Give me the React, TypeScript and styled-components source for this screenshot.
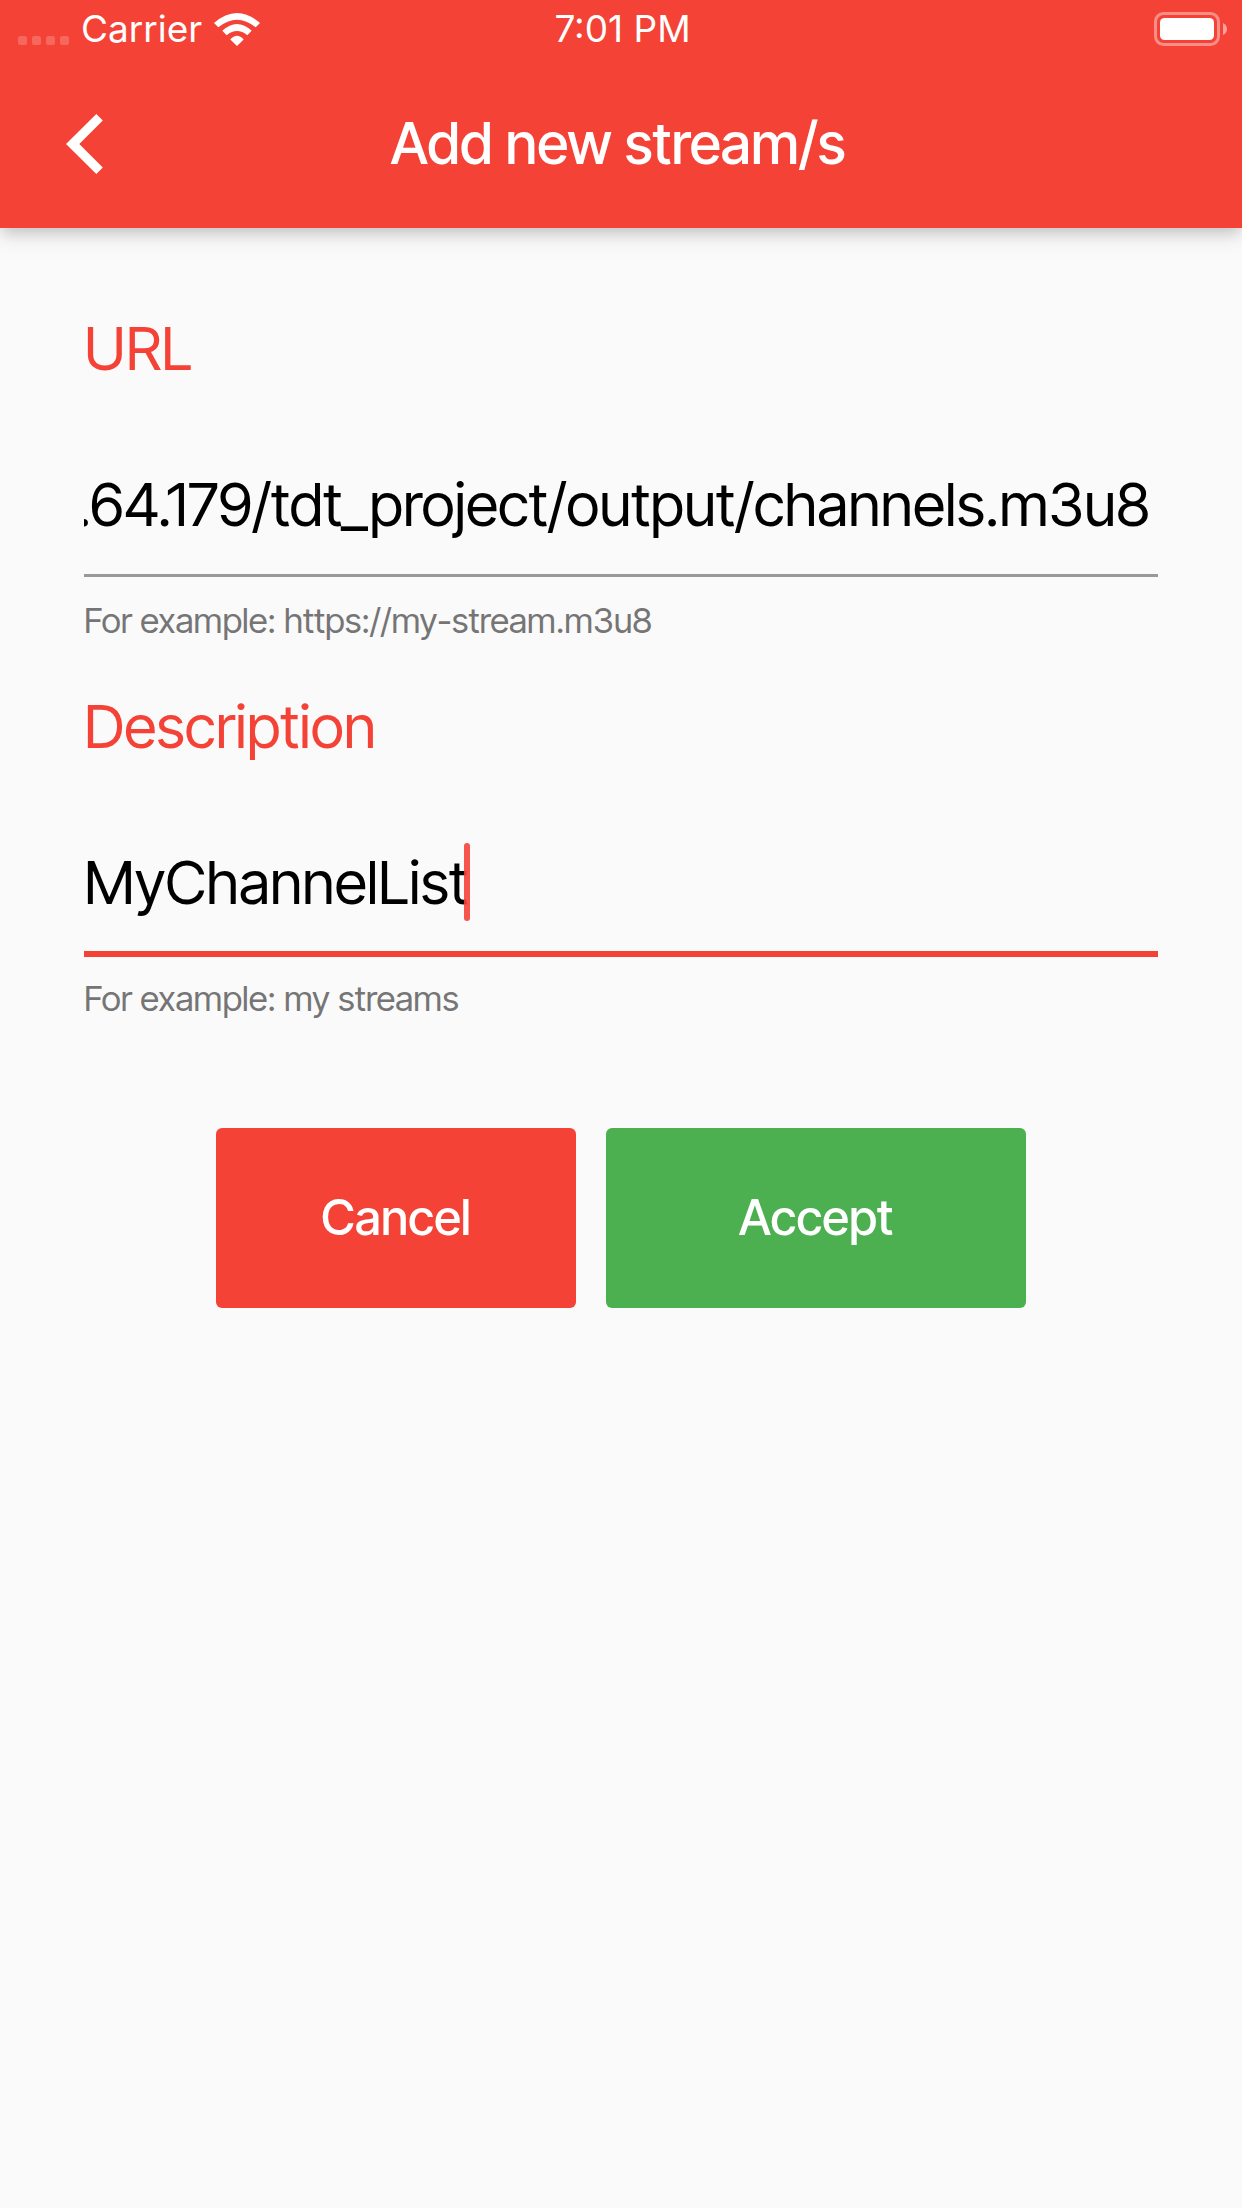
import React, { useLayoutEffect, useRef, useState } from "react";
import styled, { createGlobalStyle } from "styled-components";

const color = {
  primary: "#f44336",
  success: "#4caf50",
  page: "#fafafa",
  hint: "#757575",
  line: "#999999",
};

const GlobalStyle = createGlobalStyle`
  *, *::before, *::after { box-sizing: border-box; }
  body {
    margin: 0;
    background: ${color.page};
    font-family: "Inter Tight", Inter, "Liberation Sans", sans-serif;
    color: #000;
  }
`;

const Header = styled.header`
  background: ${color.primary};
  color: #fff;
  box-shadow:
    0 6px 12px -3px rgba(0, 0, 0, 0.12),
    0 9px 18px rgba(0, 0, 0, 0.12);
`;

const StatusBar = styled.div`
  display: grid;
  grid-template-columns: 1fr auto 1fr;
  align-items: center;
  height: 60px;
  padding: 0 15px 2px 18px;
  font-family: Inter, "Liberation Sans", sans-serif;
  font-size: 37px;
  line-height: 44px;
`;

const StatusGroup = styled.div<{ $end?: boolean }>`
  display: flex;
  align-items: center;
  justify-content: ${(p) => (p.$end ? "flex-end" : "flex-start")};
  gap: 12px;
`;

const NavBar = styled.nav`
  display: grid;
  grid-template-columns: 162px 1fr 168px;
  align-items: center;
  height: 168px;
`;

const BackButton = styled.button`
  display: flex;
  align-items: center;
  height: 144px;
  padding: 0 0 0 66px;
  border: 0;
  background: none;
  color: inherit;
  cursor: pointer;
`;

const Title = styled.h1`
  margin: 0;
  font-size: 57px;
  font-weight: 500;
  line-height: 64px;
  text-align: center;
`;

const Form = styled.form`
  display: flex;
  flex-direction: column;
  gap: 54px;
  padding: 88px 84px;
`;

const Field = styled.div`
  display: flex;
  flex-direction: column;
`;

const Label = styled.label`
  margin-bottom: 85px;
  color: ${color.primary};
  font-size: 60px;
  line-height: 64px;
`;

const InputRow = styled.div<{ $active?: boolean }>`
  display: flex;
  align-items: center;
  padding-bottom: ${(p) => (p.$active ? "30px" : "31px")};
  margin-bottom: ${(p) => (p.$active ? "0" : "2px")};
  border-bottom: ${(p) =>
    p.$active ? `6px solid ${color.primary}` : `3px solid ${color.line}`};
`;

const Input = styled.input<{ $fit?: boolean }>`
  flex: ${(p) => (p.$fit ? "0 1 auto" : "1")};
  field-sizing: ${(p) => (p.$fit ? "content" : "fixed")};
  min-width: 0;
  height: 78px;
  margin-right: ${(p) => (p.$fit ? "0" : "8px")};
  padding: 0;
  border: 0;
  outline: 0;
  background: none;
  color: inherit;
  font-family: inherit;
  font-size: 60px;
  line-height: 78px;
  caret-color: transparent;
`;

const Caret = styled.span`
  flex: none;
  width: 6px;
  height: 78px;
  margin-left: -4px;
  border-radius: 3px;
  background: ${color.primary};
  opacity: 0.9;
`;

const Hint = styled.p`
  margin: 21px 0 0;
  color: ${color.hint};
  font-size: 35px;
  line-height: 40px;
`;

const Actions = styled.div`
  display: flex;
  justify-content: center;
  gap: 30px;
  padding-top: 56px;
`;

const Button = styled.button<{ $accept?: boolean }>`
  width: ${(p) => (p.$accept ? "420px" : "360px")};
  height: 180px;
  padding: 0;
  border: 0;
  border-radius: 6px;
  background: ${(p) => (p.$accept ? color.success : color.primary)};
  color: #fff;
  font-family: inherit;
  font-size: 49px;
  font-weight: 500;
  line-height: 60px;
  cursor: pointer;
`;

const SignalDots = () => (
  <svg width="51" height="34" viewBox="0 0 51 34" fill="#fff" fillOpacity="0.2" aria-hidden="true">
    {[0, 14, 28, 42].map((x) => (
      <rect key={x} x={x} y="24" width="9" height="9" rx="2.5" />
    ))}
  </svg>
);

const WifiIcon = () => (
  <svg width="46" height="34" viewBox="0 0 46 34" fill="#fff" aria-hidden="true">
    <path d="M0 11Q23 -9 46 11L41.7 15.3Q23 0 4.3 15.3Z" />
    <path d="M8.3 18.8Q23 5.2 37.7 18.8L33.3 23.2Q23 15 12.7 23.2Z" />
    <path d="M16.3 27.5Q23 20 29.7 27.5L23 34Z" />
  </svg>
);

const BatteryIcon = () => (
  <svg width="73" height="34" viewBox="0 0 73 34" fill="#fff" aria-hidden="true">
    <rect x="1.5" y="1.5" width="63" height="31" rx="8" fill="none" stroke="#fff" strokeOpacity="0.4" strokeWidth="3" />
    <rect x="6" y="6" width="54" height="22" rx="4.5" />
    <path d="M69 11Q73 13 73 17T69 23Z" fillOpacity="0.5" />
  </svg>
);

const BackIcon = () => (
  <svg width="37" height="60" viewBox="0 0 37 60" fill="currentColor" aria-hidden="true">
    <path d="M30.3 0L36.8 6.5L13.3 30L36.8 53.5L30.3 60L0 30Z" />
  </svg>
);

export default function App() {
  const urlRef = useRef<HTMLInputElement>(null);
  const [url, setUrl] = useState(".64.179/tdt_project/output/channels.m3u8");
  const [description, setDescription] = useState("MyChannelList");

  // Long addresses stay scrolled to their end.
  useLayoutEffect(() => {
    const input = urlRef.current;
    const scrollToEnd = () => {
      if (input) input.scrollLeft = input.scrollWidth;
    };
    scrollToEnd();
    document.fonts.ready.then(scrollToEnd);
  }, [url]);

  return (
    <>
      <GlobalStyle />
      <Header>
        <StatusBar>
          <StatusGroup>
            <SignalDots />
            <span>Carrier</span>
            <WifiIcon />
          </StatusGroup>
          <span>7:01 PM</span>
          <StatusGroup $end>
            <BatteryIcon />
          </StatusGroup>
        </StatusBar>
        <NavBar>
          <BackButton type="button" aria-label="Back">
            <BackIcon />
          </BackButton>
          <Title>Add new stream/s</Title>
        </NavBar>
      </Header>
      <main>
        <Form onSubmit={(e) => e.preventDefault()}>
          <Field>
            <Label htmlFor="url">URL</Label>
            <InputRow>
              <Input
                id="url"
                ref={urlRef}
                value={url}
                onChange={(e) => setUrl(e.target.value)}
                aria-describedby="url-hint"
                spellCheck={false}
              />
            </InputRow>
            <Hint id="url-hint">For example: https://my-stream.m3u8</Hint>
          </Field>
          <Field>
            <Label htmlFor="description">Description</Label>
            <InputRow $active>
              <Input
                id="description"
                $fit
                value={description}
                onChange={(e) => setDescription(e.target.value)}
                aria-describedby="description-hint"
                spellCheck={false}
              />
              <Caret />
            </InputRow>
            <Hint id="description-hint">For example: my streams</Hint>
          </Field>
          <Actions>
            <Button type="button">Cancel</Button>
            <Button type="submit" $accept>
              Accept
            </Button>
          </Actions>
        </Form>
      </main>
    </>
  );
}
